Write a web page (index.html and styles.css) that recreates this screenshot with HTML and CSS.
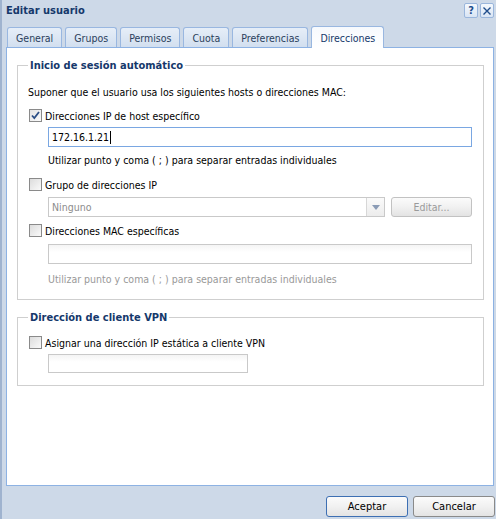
FILE: index.html
```html
<!DOCTYPE html>
<html>
<head>
<meta charset="utf-8">
<link rel="stylesheet" href="styles.css">
</head>
<body>
<div class="window">
  <div class="header">
    <div class="title">Editar usuario</div>
    <div class="tools">
      <span class="tool">?</span>
      <span class="tool">
        <svg width="10" height="10" viewBox="0 0 10 10"><path d="M1.5 1.5 L8.5 8.5 M8.5 1.5 L1.5 8.5" stroke="#1f4d8c" stroke-width="1.4" fill="none"/></svg>
      </span>
    </div>
  </div>
  <div class="tabs">
    <div class="tab">General</div>
    <div class="tab">Grupos</div>
    <div class="tab">Permisos</div>
    <div class="tab">Cuota</div>
    <div class="tab">Preferencias</div>
    <div class="tab active">Direcciones</div>
  </div>
  <div class="panel">
    <fieldset class="group g1">
      <legend>Inicio de sesión automático</legend>
      <div class="line intro">Suponer que el usuario usa los siguientes hosts o direcciones MAC:</div>
      <label class="check c1">
        <span class="box checked"><svg width="11" height="11" viewBox="0 0 11 11"><path d="M2 5.5 L4.3 8 L9 2" stroke="#2c4f86" stroke-width="1.8" fill="none"/></svg></span>
        Direcciones IP de host específico
      </label>
      <div class="field focus wide">172.16.1.21<span class="caret"></span></div>
      <div class="hint">Utilizar punto y coma ( ; ) para separar entradas individuales</div>
      <label class="check c2"><span class="box"></span>Grupo de direcciones IP</label>
      <div class="selrow">
        <div class="select"><span class="seltext">Ninguno</span><span class="arrow"><svg width="8" height="5" viewBox="0 0 8 5"><path d="M0 0 L8 0 L4 5 Z" fill="#8a9bb5"/></svg></span></div>
        <div class="btn disabled">Editar...</div>
      </div>
      <label class="check c3"><span class="box"></span>Direcciones MAC específicas</label>
      <div class="field wide empty mac"></div>
      <div class="hint grey">Utilizar punto y coma ( ; ) para separar entradas individuales</div>
    </fieldset>
    <fieldset class="group g2">
      <legend>Dirección de cliente VPN</legend>
      <label class="check"><span class="box"></span>Asignar una dirección IP estática a cliente VPN</label>
      <div class="field short empty"></div>
    </fieldset>
  </div>
  <div class="footer">
    <div class="btn big default">Aceptar</div>
    <div class="btn big">Cancelar</div>
  </div>
</div>
</body>
</html>
```

FILE: styles.css
```css
* { box-sizing: border-box; }
html, body { margin: 0; padding: 0; }
body {
  background: #cdd9e8;
  font-family: "DejaVu Sans Condensed", "Liberation Sans", Arial, sans-serif;
  font-size: 10.5px;
  color: #000;
}
.window {
  width: 496px;
  height: 519px;
  border-left: 2px solid #9fb3cf;
  background: #cdd9e8;
}
.header {
  height: 26px;
  display: flex;
  align-items: flex-start;
  justify-content: space-between;
}
.title {
  font-weight: bold;
  color: #15386b;
  font-size: 11px;
  padding: 4px 0 0 4px;
}
.tools { display: flex; gap: 2px; padding: 3px 2px 0 0; }
.tool {
  width: 14px; height: 15px;
  border: 1px solid #9ab6dc;
  border-radius: 2px;
  background: linear-gradient(#f4f8fd, #d9e5f4);
  color: #1f4d8c;
  font-weight: bold;
  font-size: 11px;
  display: flex; align-items: center; justify-content: center;
  line-height: 1;
}
.tabs {
  display: flex;
  align-items: flex-end;
  gap: 3px;
  padding-left: 5px;
  height: 21px;
}
.tab {
  height: 20px;
  padding: 0 8px;
  border: 1px solid #99b7e0;
  border-bottom: none;
  border-radius: 3px 3px 0 0;
  background: linear-gradient(#e6eef8, #d2dfef);
  color: #2b3f5c;
  display: flex; align-items: center;
  font-size: 10.5px;
}
.tab.active {
  height: 22px;
  background: linear-gradient(#f6f9fd, #ffffff);
  color: #15386b;
  margin-bottom: -1px;
  position: relative;
  z-index: 2;
}
.panel {
  margin-left: 4px;
  width: 488px;
  height: 439px;
  background: #fff;
  border: 1px solid #8db2e3;
  padding: 11px 9px 0 10px;
}
.group {
  margin: 0;
  border: 1px solid #cfcfcf;
  border-radius: 0;
  padding: 0 0 0 10px;
}
.group legend {
  font-weight: bold;
  color: #15386b;
  padding: 0 2px;
  margin-left: 0;
  font-size: 11px;
}
.g1 { padding-top: 11px; padding-bottom: 4px; }
.g2 { margin-top: 11px; padding-top: 8px; padding-bottom: 12px; }
.line { height: 18px; line-height: 18px; }
.check {
  display: flex; align-items: center;
  height: 21px;
  gap: 3px;
  padding-left: 1px;
}
.box {
  width: 13px; height: 13px;
  border: 1px solid #8a8a8a;
  background: linear-gradient(135deg, #dcdcdc, #fafafa);
  display: flex; align-items: center; justify-content: center;
}
.box.checked { background: linear-gradient(135deg, #e4e4e4, #fbfbfb); }
.field {
  margin-left: 20px;
  height: 20px;
  border: 1px solid #c9c9c9;
  background: #fff;
  padding: 0 3px;
  display: flex; align-items: center;
}
.field.empty { background: linear-gradient(#f4f4f4, #fff 40%); }
.field.focus { border-color: #7aa7e2; margin-top: 1px; }
.field.mac { margin-top: 3px; }
.field.wide { width: 424px; }
.field.short { width: 200px; height: 19px; margin-top: 1px; }
.caret { display: inline-block; width: 1px; height: 13px; background: #000; margin-left: 1px; }
.hint { margin-left: 20px; height: 27px; line-height: 27px; }
.hint.grey { color: #999; height: 31px; line-height: 31px; }
.c1 { margin-top: 4px; }
.selrow { display: flex; gap: 6px; margin-left: 20px; margin-top: 2px; }
.select {
  width: 337px; height: 20px;
  border: 1px solid #c9c9c9;
  display: flex; align-items: stretch;
  background: #fff;
}
.seltext { flex: 1; color: #8c8c8c; padding-left: 3px; display: flex; align-items: center; }
.arrow {
  width: 18px;
  border-left: 1px solid #d7d7d7;
  background: linear-gradient(#fafafa, #ececec);
  display: flex; align-items: center; justify-content: center;
}
.btn {
  height: 20px;
  border: 1px solid #aaaaaa;
  border-radius: 3px;
  background: linear-gradient(#fbfbfb 0%, #f1f1f1 50%, #e3e3e3 100%);
  display: flex; align-items: center; justify-content: center;
}
.btn.disabled { width: 81px; color: #9a9a9a; border-color: #c2c2c2; }
.c3 { margin-top: 3px; }
.footer {
  display: flex;
  justify-content: flex-end;
  gap: 5px;
  padding: 10px 1px 0 0;
}
.btn.big { width: 82px; height: 21px; border-color: #8a8a8a; font-size: 11px; }
.btn.default { border-color: #3d6fb3; }
```
